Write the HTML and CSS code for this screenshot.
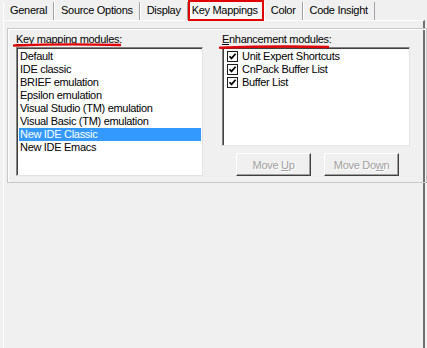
FILE: index.html
```html
<!DOCTYPE html>
<html lang="en">
<head>
  <meta charset="UTF-8">
  <title>Key Mappings</title>
  <link rel="stylesheet" href="styles.css">
</head>
<body>
  <div class="tabs">
    <div class="tab">General</div>
    <div class="tab">Source Options</div>
    <div class="tab">Display</div>
    <div class="tab active">Key Mappings</div>
    <div class="tab">Color</div>
    <div class="tab">Code Insight</div>
  </div>
  <div class="panel">
    <div class="group">
      <div class="column">
        <div class="label"><u>K</u>ey mapping modules:
          <svg class="mark" width="112" height="6" viewBox="0 0 112 6"><path d="M1 3.5 Q 50 1.5 107 3" stroke="#e00000" stroke-width="2.4" fill="none" stroke-linecap="round"/></svg>
        </div>
        <div class="listbox tall">
          <div class="item">Default</div>
          <div class="item">IDE classic</div>
          <div class="item">BRIEF emulation</div>
          <div class="item">Epsilon emulation</div>
          <div class="item">Visual Studio (TM) emulation</div>
          <div class="item">Visual Basic (TM) emulation</div>
          <div class="item selected">New IDE Classic</div>
          <div class="item">New IDE Emacs</div>
        </div>
      </div>
      <div class="column">
        <div class="label"><u>E</u>nhancement modules:
          <svg class="mark right" width="114" height="6" viewBox="0 0 114 6"><path d="M1 3.8 Q 55 1.8 109 3" stroke="#e00000" stroke-width="2.4" fill="none" stroke-linecap="round"/></svg>
        </div>
        <div class="listbox short">
          <div class="item check"><svg width="11" height="11" viewBox="0 0 11 11"><rect x="0.5" y="0.5" width="10" height="10" fill="#fff" stroke="#1c1c1c"/><path d="M2.5 5.2 L4.5 7.4 L8.6 2.8" stroke="#000" stroke-width="1.7" fill="none"/></svg>Unit Expert Shortcuts</div>
          <div class="item check"><svg width="11" height="11" viewBox="0 0 11 11"><rect x="0.5" y="0.5" width="10" height="10" fill="#fff" stroke="#1c1c1c"/><path d="M2.5 5.2 L4.5 7.4 L8.6 2.8" stroke="#000" stroke-width="1.7" fill="none"/></svg>CnPack Buffer List</div>
          <div class="item check"><svg width="11" height="11" viewBox="0 0 11 11"><rect x="0.5" y="0.5" width="10" height="10" fill="#fff" stroke="#1c1c1c"/><path d="M2.5 5.2 L4.5 7.4 L8.6 2.8" stroke="#000" stroke-width="1.7" fill="none"/></svg>Buffer List</div>
        </div>
        <div class="buttons">
          <button disabled>Move <u>U</u>p</button>
          <button disabled>Move Do<u>w</u>n</button>
        </div>
      </div>
    </div>
  </div>
</body>
</html>
```

FILE: styles.css
```css
body {
  margin: 0;
  background-color: #f0f0f0;
  font-family: "Liberation Sans", Arial, sans-serif;
  font-size: 11px;
  letter-spacing: -0.3px;
  color: #000;
  width: 427px;
  height: 348px;
  overflow: hidden;
}
.tabs {
  display: flex;
  align-items: flex-end;
  height: 20px;
  padding-left: 3px;
}
.tab {
  height: 18px;
  line-height: 17px;
  padding: 0 6px 0 6px;
  border-left: 1px solid #fff;
  border-right: 1px solid #a0a0a0;
  white-space: nowrap;
}
.tab.active {
  height: 17px;
  line-height: 17px;
  padding: 0 4px 0 2px;
  border: 2px solid #e00000;
  background-color: #f8f8f8;
  position: relative;
  z-index: 1;
  margin-bottom: -1px;
}
.panel {
  margin: 0 2px 0 3px;
  height: 325px;
  border-top: 1px solid #fff;
  border-left: 1px solid #fff;
  border-right: 2px solid #707070;
  border-bottom: 2px solid #707070;
  padding: 7px 4px 0 3px;
}
.group {
  display: grid;
  grid-template-columns: 187px 188px;
  column-gap: 19px;
  border: 1px solid #c8c8c8;
  box-shadow: 1px 1px 0 #fff inset;
  padding: 3px 8px 7px 8px;
  width: 402px;
  height: 143px;
}
.label {
  position: relative;
  height: 14px;
  line-height: 14px;
  margin-bottom: 1px;
}
.mark {
  position: absolute;
  left: -3px;
  top: 10px;
}
.mark.right {
  top: 12px;
}
.listbox {
  background-color: #fff;
  border-top: 1px solid #828282;
  border-left: 1px solid #828282;
  border-right: 1px solid #e3e3e3;
  border-bottom: 1px solid #e3e3e3;
  box-shadow: 1px 1px 0 #404040 inset;
  padding: 2px 1px 0 2px;
}
.listbox.tall {
  height: 125px;
}
.listbox.short {
  height: 95px;
}
.item {
  height: 13px;
  line-height: 13px;
  padding-left: 1px;
  white-space: nowrap;
}
.item.selected {
  background-color: #3399ff;
  color: #fff;
}
.item.check {
  display: flex;
  align-items: center;
  gap: 4px;
  padding-left: 2px;
}
.buttons {
  display: flex;
  justify-content: center;
  gap: 13px;
  margin-top: 7px;
  padding-left: 3px;
}
button {
  width: 75px;
  height: 23px;
  padding: 0;
  font-family: inherit;
  font-size: 11px;
  letter-spacing: -0.3px;
  color: #a0a0a0;
  text-shadow: 1px 1px 0 #fff;
  background-color: #f0f0f0;
  border-top: 1px solid #fff;
  border-left: 1px solid #fff;
  border-right: 1px solid #404040;
  border-bottom: 1px solid #404040;
  box-shadow: -1px -1px 0 #a0a0a0 inset;
}
```
